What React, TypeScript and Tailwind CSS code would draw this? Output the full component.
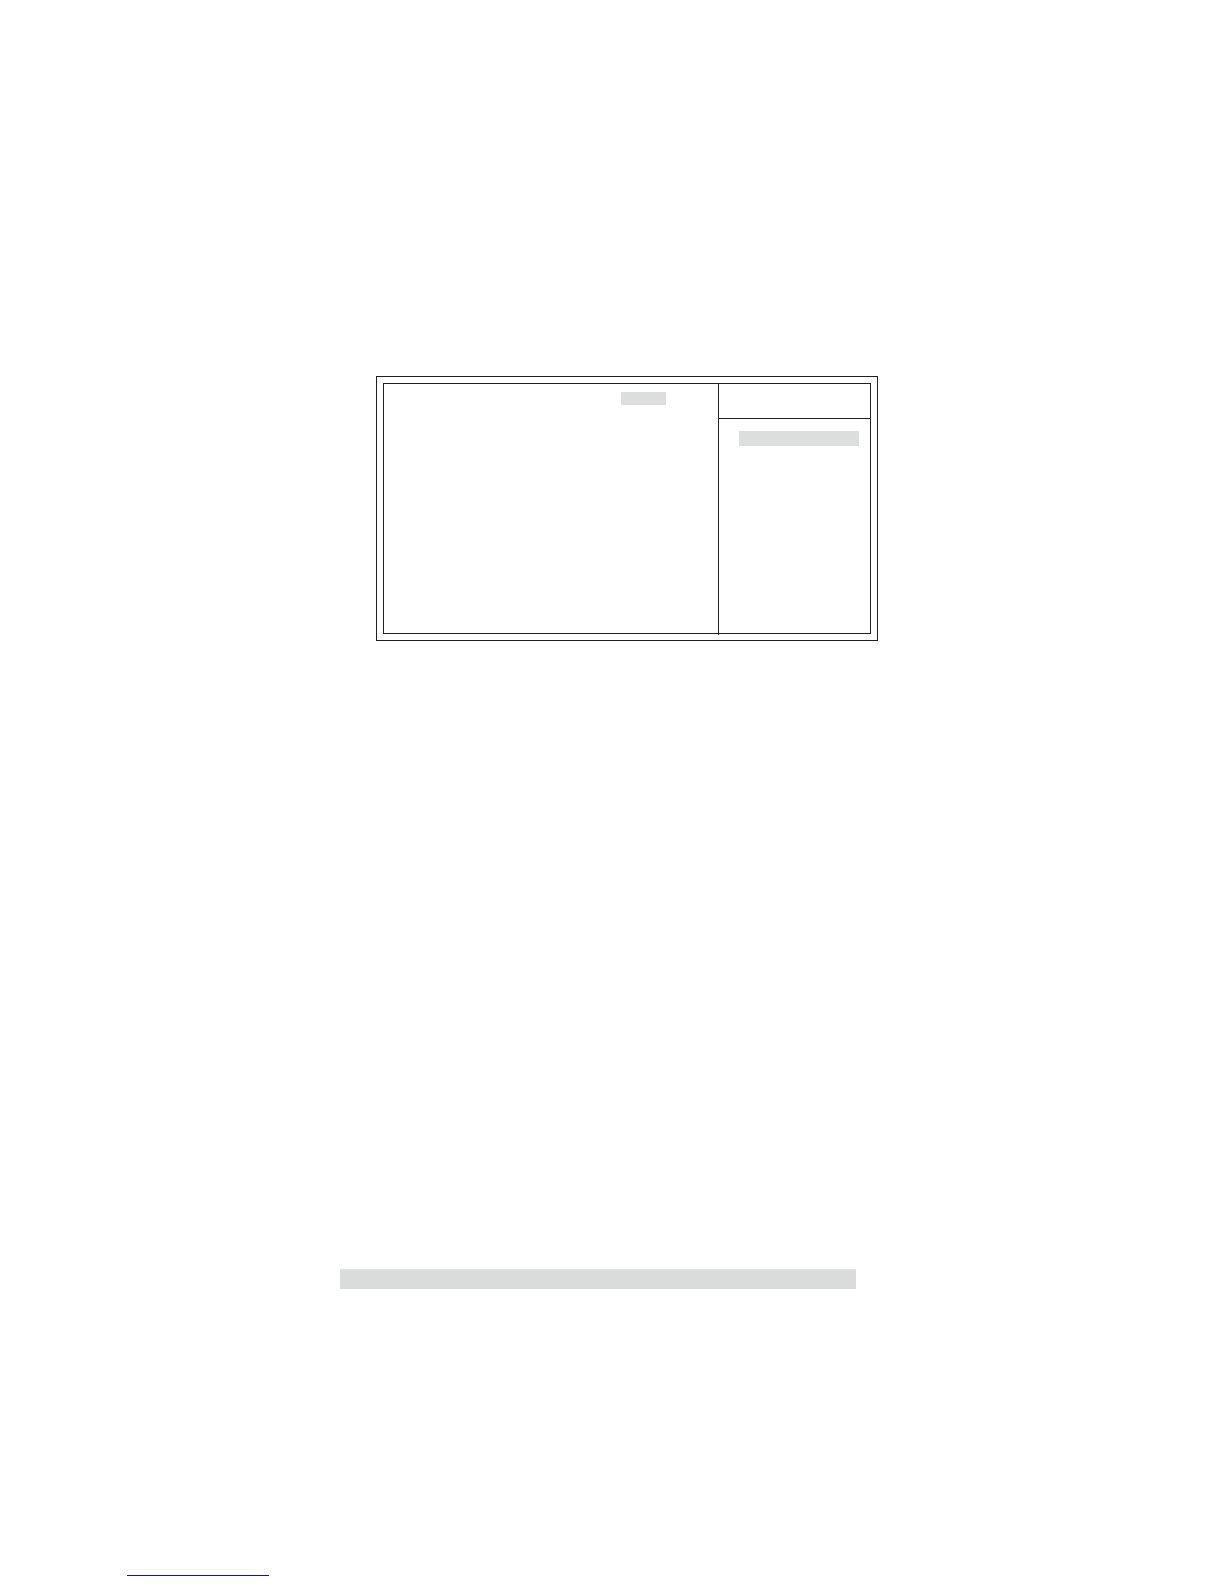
export default function App() {
  return (
    <main className="flow-root bg-white">
      <section className="mt-[376px] mr-[346px] ml-[376px] border border-[#231f20] p-[6px]">
        <div className="flex min-h-[251px] border border-[#231f20]">
          <div className="flex flex-1 justify-end">
            <div className="mt-2 mr-[52px] h-[13px] w-[45px] bg-[#dcdddd]" />
          </div>
          <aside className="-mb-[2px] w-[152px] border-l border-[#231f20]">
            <div className="h-[35px] border-b border-[#231f20]" />
            <div className="mt-3 mr-[11px] ml-5 h-[15px] bg-[#dcdddd]" />
          </aside>
        </div>
      </section>
      <div className="mt-[628px] mr-[368px] ml-[340px] h-5 border-t-2 border-[#dfe1e0] bg-[#dadcdb]" />
      <hr className="mt-[286px] mb-2 ml-[127px] h-px w-[142px] border-0 bg-[#14149c]" />
    </main>
  );
}
